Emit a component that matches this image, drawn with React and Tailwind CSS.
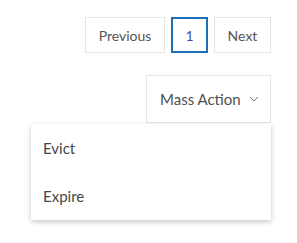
import React from "react";

export default function App() {
  return (
    <div className="w-[297px] h-[243px] bg-white pr-[26px] pt-[17px] flex flex-col items-end" style={{ fontFamily: "Lato, 'Open Sans', sans-serif" }}>
      <div className="flex gap-[6px]">
        <button className="w-[80px] h-[36px] border border-[#e5e5e5] text-[14px] text-[#555] flex items-center justify-center">Previous</button>
        <button className="w-[37px] h-[36px] border-2 border-[#1a6fb8] text-[14px] text-[#4a52a8] flex items-center justify-center">1</button>
        <button className="w-[57px] h-[36px] border border-[#e5e5e5] text-[14px] text-[#555] flex items-center justify-center">Next</button>
      </div>
      <div className="relative mt-[22px]">
        <button className="w-[125px] h-[48px] border border-[#e5e5e5] flex items-center pl-[13px] pr-[11px] text-[15px] text-[#505050]">
          <span>Mass Action</span>
          <svg className="ml-auto" width="10" height="6" viewBox="0 0 10 6" fill="none">
            <path d="M1 1l4 4 4-4" stroke="#7a7a7a" strokeWidth="1" />
          </svg>
        </button>
        <div className="absolute right-0 top-[49px] w-[240px] bg-white shadow-[0_2px_5px_rgba(0,0,0,0.22)]">
          <div className="h-[48px] flex items-center pl-[12px] text-[15px] text-[#474747]">Evict</div>
          <div className="h-[48px] flex items-center pl-[12px] text-[15px] text-[#474747]">Expire</div>
        </div>
      </div>
    </div>
  );
}
